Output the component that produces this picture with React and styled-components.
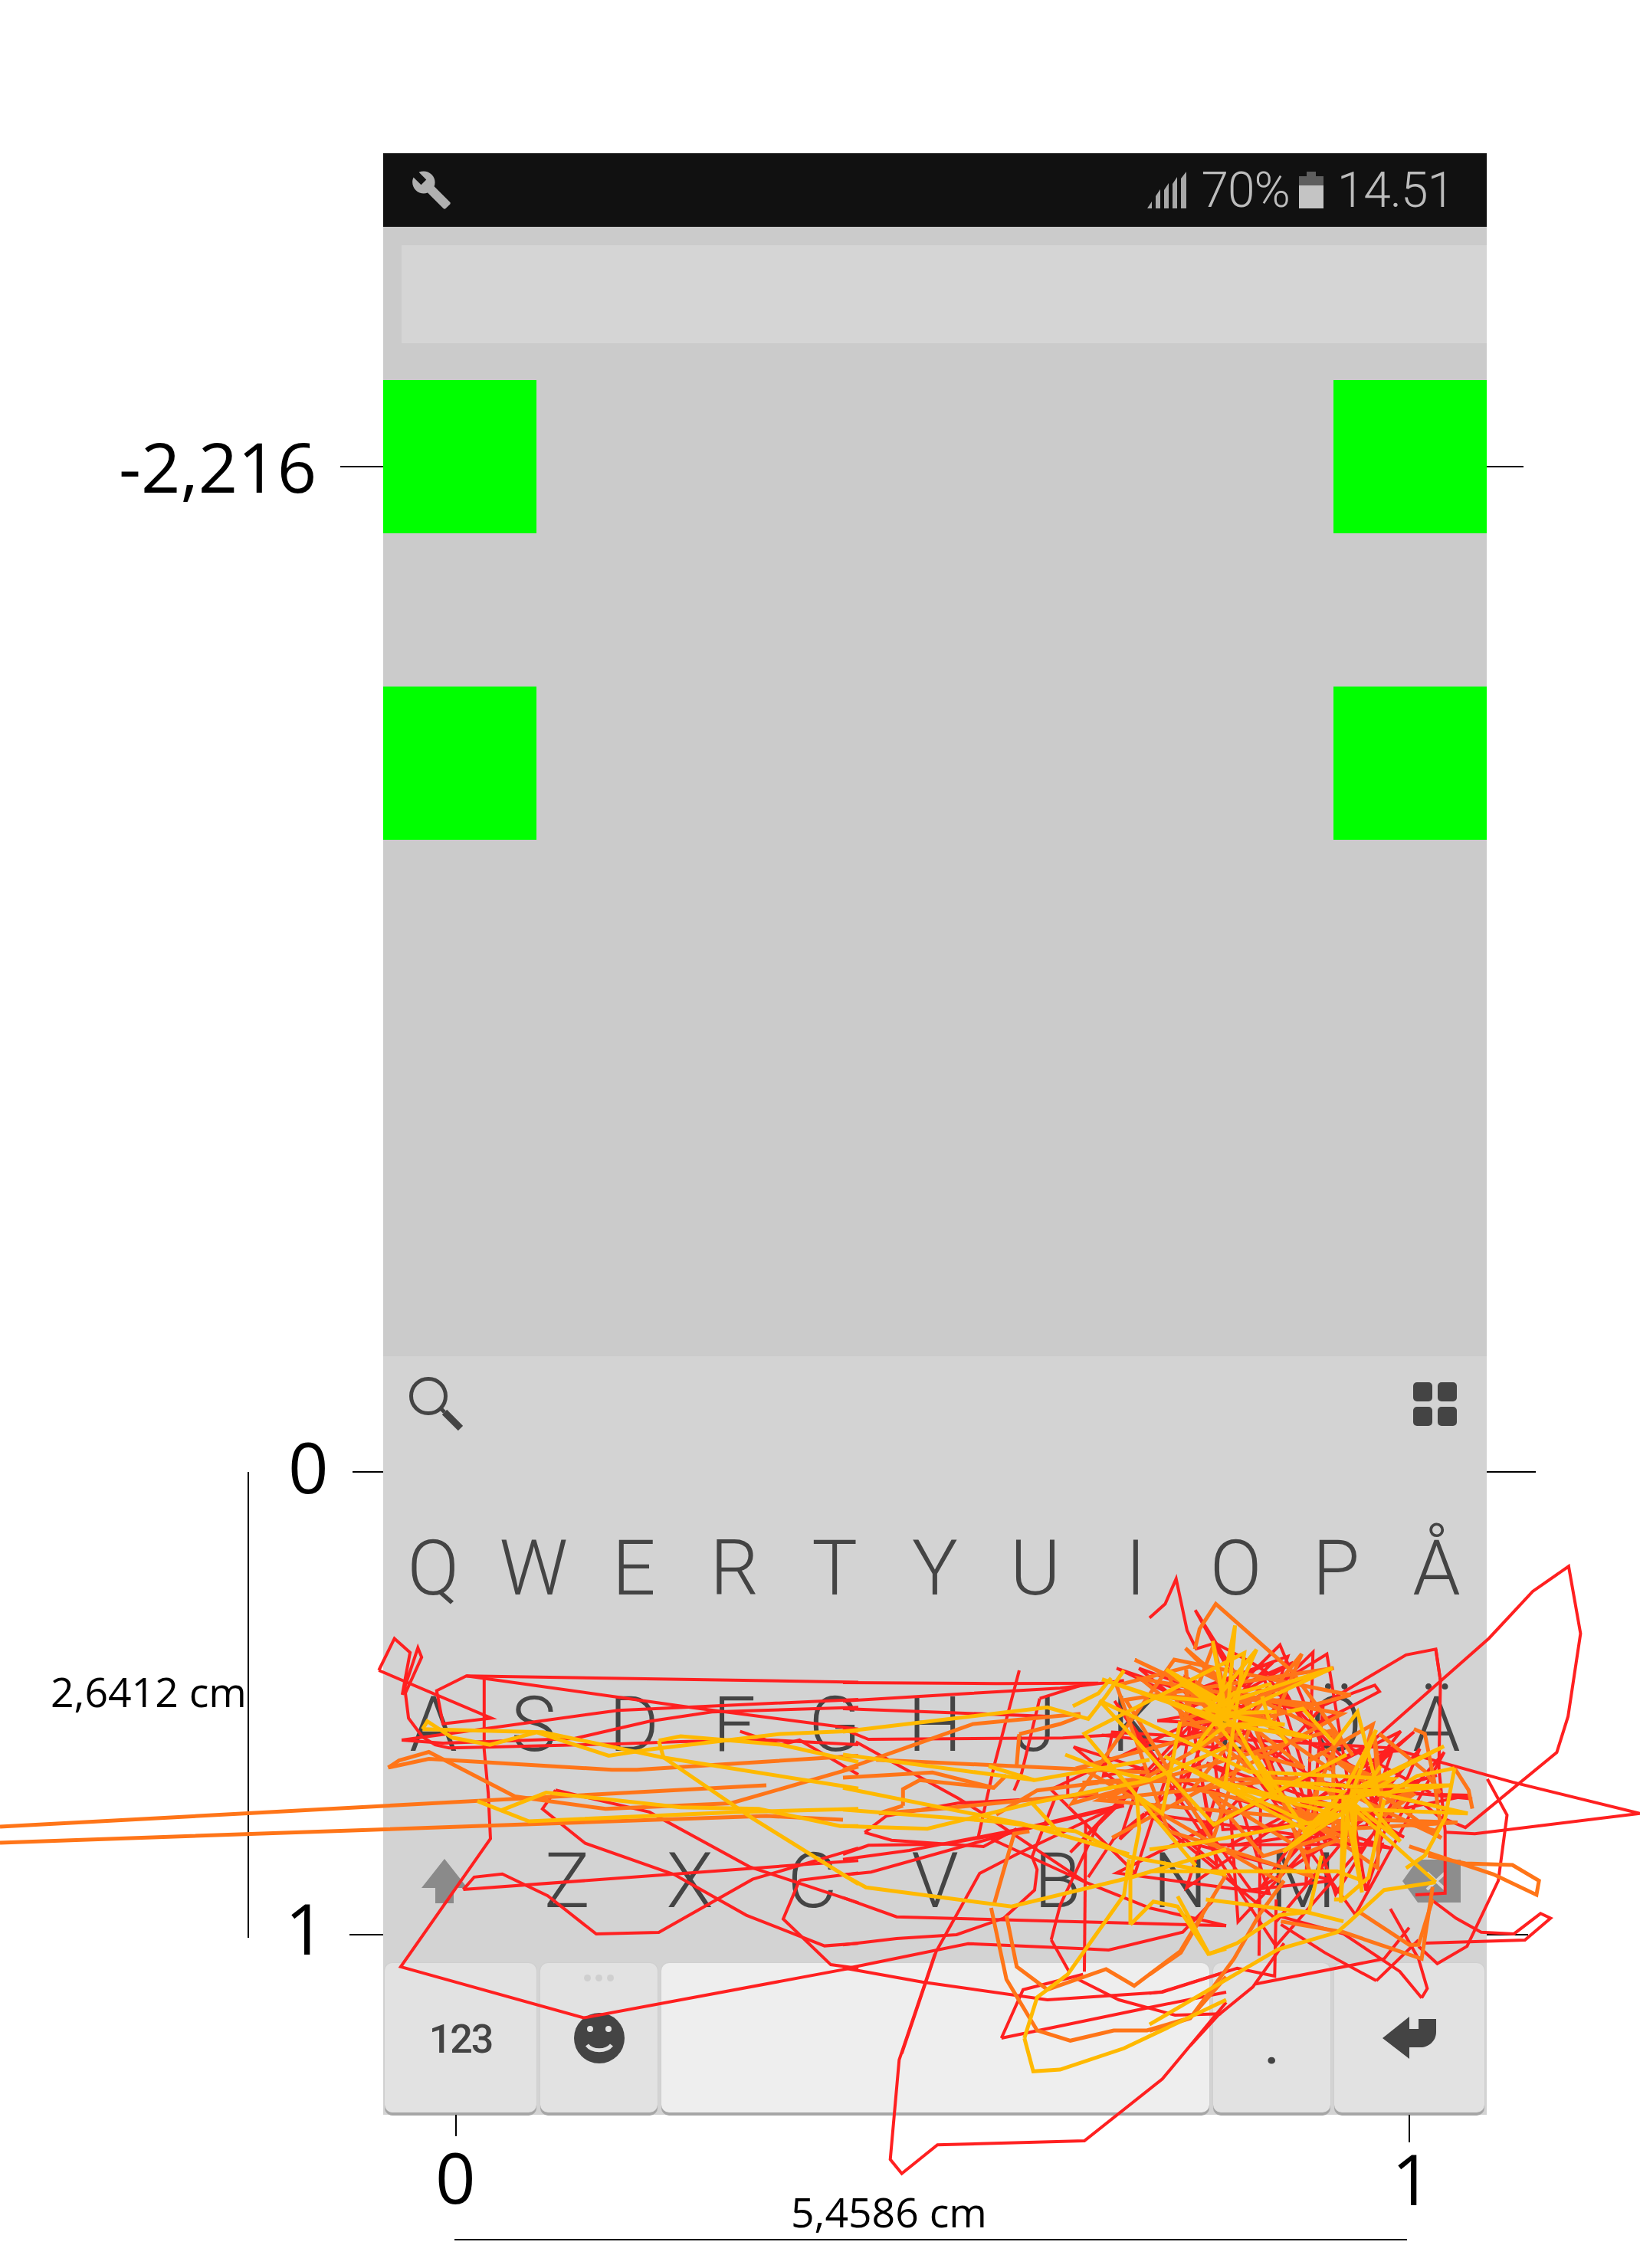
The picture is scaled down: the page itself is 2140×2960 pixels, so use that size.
import styled, { createGlobalStyle } from "styled-components"

const Global = createGlobalStyle`
body {
    margin: 0;
    background: #fff;
}
`

const Figure = styled.div`
position: relative;
width: 2140px;
height: 2960px;
padding: 200px 0 0 500px;
box-sizing: border-box;
background: #fff;
overflow: hidden;
`

const Phone = styled.div`
display: flex;
flex-direction: column;
width: 1440px;
height: 2560px;
font-family: Roboto, sans-serif;
`

const StatusBar = styled.div`
display: flex;
flex: 0 0 96px;
align-items: center;
justify-content: space-between;
padding: 0 43px 0 36px;
background: #111;
color: #bcbcbc;
`

const StatusRight = styled.div`
display: flex;
align-items: center;
font-size: 64px;
font-weight: 300;
line-height: 1;
`

const StatusText = styled.span`
margin-left: ${props => props.$gap}px;
padding-top: 2px;
letter-spacing: -1px;
`

const Screen = styled.div`
flex: 1;
padding-top: 24px;
background: #cbcbcb;
`

const SearchBar = styled.div`
height: 128px;
margin-left: 24px;
background: #d5d5d5;
`

const Targets = styled.div`
display: grid;
grid-template-columns: 200px 200px;
justify-content: space-between;
row-gap: 200px;
margin-top: 48px;
`

const Target = styled.div`
height: 200px;
background: #0f0;
`

const Keyboard = styled.div`
display: flex;
flex: 0 0 990px;
flex-direction: column;
background: #d3d3d3;
color: #444;
`

const Toolbar = styled.div`
display: flex;
flex: 0 0 175px;
justify-content: space-between;
padding: 27px 38px 0 34px;
box-sizing: border-box;
`

const LetterRow = styled.div`
display: grid;
flex: 0 0 204px;
grid-template-columns: ${props => props.$columns};
`

const Letter = styled.span`
display: flex;
align-items: center;
justify-content: center;
font-size: 100px;
font-weight: 300;
line-height: 1;
`

const BottomRow = styled.div`
display: flex;
gap: 5px;
height: 195px;
margin-top: 5px;
padding: 0 2px;
`

const Key = styled.div`
display: flex;
position: relative;
flex: 0 0 ${props => props.$width}px;
align-items: center;
justify-content: center;
box-sizing: border-box;
border-radius: 10px;
background: ${props => props.$light ? "#eee" : "#e2e2e2"};
box-shadow: 0 4px 0 #a6a6a6, 0 0 0 1px #cfcfcf;
`

const NumberLabel = styled.span`
padding-top: 4px;
font-size: 52px;
font-weight: 500;
letter-spacing: -2px;
line-height: 1;
`

const PeriodLabel = styled.span`
padding-top: 26px;
font-size: 60px;
font-weight: 700;
line-height: 1;
`

const Hint = styled.div`
display: flex;
position: absolute;
top: 15px;
left: 0;
right: 0;
justify-content: center;
gap: 6px;
`

const HintDot = styled.i`
width: 9px;
height: 9px;
border-radius: 50%;
background: #cfcfcf;
`

const Mark = styled.span`
position: absolute;
left: ${props => props.$x}px;
top: ${props => props.$y}px;
font-family: "Open Sans", sans-serif;
font-size: ${props => props.$size}px;
line-height: 1;
white-space: nowrap;
color: #000;
`

const Tick = styled.div`
position: absolute;
left: ${props => props.$x}px;
top: ${props => props.$y}px;
width: ${props => props.$w}px;
height: ${props => props.$h}px;
background: #000;
`

const Trace = styled.svg`
position: absolute;
left: 0;
top: 0;
pointer-events: none;
`

// points below were read off zoomed crops, so each list keeps its crop origin and scale
const crop = (x, y, s, list) => list.map(line => line.map(([a, b]) => [x + a / s, y + b / s]))
const left = list => crop(480, 2120, 2.45, list)
const mid = list => crop(1100, 2180, 3, list)
const right = list => crop(1500, 2030, 2.45, list)

const hubs = [[1594, 2234], [1753, 2348]]

function randomFrom(seed) {
    let n = seed
    return () => {
        n = (n * 16807) % 2147483647
        return n / 2147483647
    }
}

// spokes going out from the two most used keys and back
function scribble(seed, count, minR, maxR, jitter) {
    const rnd = randomFrom(seed)
    return hubs.map(([hx, hy]) => {
        const line = []
        for (let i = 0; i < count; i++) {
            const a = rnd() * Math.PI * 2
            const r = minR + rnd() * (maxR - minR)
            line.push([hx + Math.cos(a) * r, hy + Math.sin(a) * r * 0.8])
            line.push([hx + (rnd() - 0.5) * jitter, hy + (rnd() - 0.5) * jitter])
        }
        return line
    })
}

// wandering line over the right half of the keyboard
function web(seed, count, cx, cy, rx, ry) {
    const rnd = randomFrom(seed)
    const line = []
    for (let i = 0; i < count; i++) {
        const a = rnd() * Math.PI * 2
        const r = Math.sqrt(rnd())
        line.push([cx + Math.cos(a) * r * rx, cy + Math.sin(a) * r * ry])
    }
    return [line]
}

const red = [
    ...left([
        [[35, 147], [85, 45], [135, 90], [110, 225], [160, 75], [172, 105], [120, 220], [130, 300], [175, 360], [215, 385], [260, 395], [400, 392], [800, 382], [1000, 375], [1290, 370], [1568, 385]],
        [[35, 147], [395, 300], [240, 318], [220, 212], [315, 165], [1568, 185]],
        [[372, 170], [372, 400], [385, 540], [392, 685], [105, 1095], [690, 1258], [1568, 1095]],
        [[108, 370], [400, 330], [800, 275], [1568, 240]],
        [[108, 370], [240, 380], [660, 365], [900, 310], [1100, 280], [1568, 265]],
        [[315, 165], [1030, 265], [1568, 335]],
        [[1190, 342], [1320, 385], [1380, 370], [1568, 480]],
        [[600, 530], [900, 600], [1220, 775], [1568, 890]],
        [[600, 530], [558, 590], [695, 700], [980, 800], [1210, 930], [1460, 1028], [1568, 1020]],
        [[305, 848], [340, 808], [430, 798], [575, 868], [730, 990], [930, 985], [1230, 815], [1568, 715]],
        [[305, 848], [1568, 755]],
        [[1380, 818], [1568, 795]],
        [[1380, 818], [1328, 942], [1480, 1088], [1568, 1100]],
    ]),
    ...mid([
        [[0, 48], [600, 52], [1000, 50]],
        [[0, 120], [500, 90], [850, 70], [1100, 40]],
        [[0, 150], [400, 165], [800, 180]],
        [[0, 230], [100, 270], [860, 265], [1100, 250]],
        [[85, 635], [190, 665], [550, 690], [680, 620]],
        [[85, 635], [170, 570], [450, 520], [1000, 490]],
        [[0, 720], [100, 685], [400, 680], [680, 630], [1100, 530]],
        [[0, 740], [260, 705], [700, 620], [1080, 530]],
        [[10, 800], [110, 790], [680, 630]],
        [[0, 890], [210, 965], [1500, 1000]],
        [[0, 1075], [210, 1050], [445, 1035], [630, 970], [750, 860], [760, 780], [740, 730], [830, 500]],
        [[0, 1170], [490, 1070], [940, 1090], [1040, 1095], [1330, 1025], [1450, 900]],
        [[230, 1500], [365, 1100], [535, 795], [680, 720], [1100, 520]],
        [[0, 1165], [310, 1220], [800, 1290], [1250, 1260], [1500, 1180]],
        [[620, 1440], [705, 1250], [940, 1190]],
        [[620, 1440], [1200, 1320], [1500, 1260]],
        [[950, 590], [945, 1180]],
        [[880, 410], [880, 500]],
        [[815, 1055], [850, 920], [1000, 600]],
        [[815, 1055], [885, 1180]],
        [[920, 1210], [1080, 1290], [1300, 1350], [1480, 1345]],
        [[690, 0], [590, 380], [530, 650]],
        [[770, 110], [960, 50]],
        [[770, 110], [700, 400], [670, 470]],
        [[960, 810], [1060, 660], [1180, 560]],
        [[580, 660], [950, 830], [1200, 930], [1500, 1000]],
        [[50, 280], [450, 500], [530, 550], [950, 830]],
    ]),
    ...crop(1100, 2500, 3, [
        [[360, 150], [220, 565], [185, 955], [230, 1010], [370, 898], [945, 882], [1250, 640], [1500, 340]],
    ]),
    ...right([
        [[0, 200], [50, 155], [85, 75], [120, 240], [145, 290]],
        [[145, 300], [210, 280], [330, 345], [415, 400], [470, 500], [520, 570]],
        [[930, 400], [915, 300], [820, 318], [530, 490], [650, 440], [720, 415], [735, 435], [650, 480], [530, 540]],
        [[705, 600], [1085, 265], [1225, 115], [1340, 35], [1378, 250], [1338, 515], [1302, 630], [1010, 870], [925, 835], [870, 790], [830, 785], [790, 850]],
        [[915, 300], [930, 400], [925, 680], [945, 880], [945, 1080], [850, 1085]],
        [[730, 630], [800, 625], [1160, 725], [1568, 825], [1040, 890], [945, 885]],
        [[1080, 715], [1143, 830], [1115, 1040], [1015, 1250], [920, 1305], [860, 1250]],
        [[880, 1240], [1200, 1230], [1282, 1160], [1250, 1145], [1165, 1210], [1060, 1205], [980, 1160], [900, 1100]],
        [[870, 1415], [888, 1385], [860, 1290], [770, 1130]],
        [[870, 1415], [800, 1330], [620, 1210], [420, 1155]],
        [[725, 1360], [560, 1270], [420, 1180]],
        [[725, 1360], [860, 1230]],
        [[340, 1370], [750, 1290], [830, 1190]],
        [[0, 1400], [40, 1395], [280, 1320], [400, 1345], [405, 1100]],
        [[130, 1568], [220, 1470], [330, 1380], [430, 1240]],
        [[350, 1280], [355, 800]],
    ]),
    ...scribble(11, 12, 40, 200, 70),
    ...web(5, 60, 1640, 2340, 280, 210),
]

const orange = [
    [[0, 2384], [1000, 2330]],
    [[0, 2405], [1000, 2370], [1100, 2375]],
    ...left([
        [[65, 458], [100, 435], [195, 408], [470, 550], [760, 590], [1160, 572], [1568, 455]],
        [[65, 458], [195, 430], [780, 465], [860, 465], [1568, 420]],
    ]),
    ...mid([
        [[0, 390], [510, 210], [930, 170]],
        [[0, 420], [350, 400], [590, 460], [640, 410]],
        [[130, 350], [1200, 400]],
        [[235, 530], [235, 465], [300, 430], [590, 460]],
        [[235, 530], [140, 560], [400, 540], [1000, 480]],
        [[600, 565], [760, 470], [1000, 440]],
        [[690, 250], [850, 210], [930, 180]],
        [[690, 250], [680, 370]],
        [[590, 920], [670, 640], [730, 630]],
        [[580, 930], [640, 1210], [760, 1410], [890, 1450], [1060, 1410], [1190, 1410], [1360, 1360], [1500, 1200]],
        [[640, 960], [680, 1160], [800, 1250], [1030, 1170], [1140, 1235], [1320, 1100], [1500, 800]],
    ]),
    ...right([
        [[145, 300], [160, 235], [212, 155], [455, 370], [600, 570], [650, 640]],
        [[735, 570], [880, 690], [930, 760]],
        [[845, 555], [880, 570], [910, 720], [930, 860], [915, 880], [830, 860]],
        [[975, 680], [1020, 750], [1032, 810]],
        [[890, 960], [1010, 985], [1160, 990], [1245, 1040], [1237, 1085], [1100, 1020], [830, 930]],
        [[905, 1060], [870, 1290], [620, 1205], [420, 1170]],
        [[205, 285], [150, 430]],
        [[205, 285], [250, 480]],
        [[670, 1140], [830, 1245], [860, 1245], [905, 1100]],
        [[0, 1340], [100, 1270], [170, 1150]],
        [[430, 1040], [350, 1150], [270, 1290], [130, 1480], [0, 1520]],
    ]),
    ...scribble(23, 12, 30, 170, 120),
    ...web(9, 34, 1630, 2310, 250, 160),
]

const amber = [
    ...left([
        [[175, 335], [190, 310], [270, 362], [390, 385], [540, 345], [770, 420], [900, 400], [1320, 350], [1568, 340]],
        [[175, 335], [560, 345], [940, 425], [1568, 525]],
        [[930, 372], [1000, 358], [1320, 385], [1568, 440]],
        [[930, 372], [945, 425], [1230, 620], [1568, 830]],
        [[350, 565], [515, 630], [1180, 600], [1568, 590]],
        [[425, 595], [570, 538], [1000, 585], [1250, 590], [1510, 645], [1568, 645]],
    ]),
    ...mid([
        [[0, 240], [800, 145], [960, 190], [1030, 100], [1100, 0]],
        [[0, 330], [750, 430], [1200, 350]],
        [[0, 460], [700, 600], [1120, 720]],
        [[0, 545], [580, 590], [910, 630], [1120, 730], [1500, 800]],
        [[0, 610], [330, 620], [740, 520], [1200, 430], [1500, 300]],
        [[570, 375], [750, 430]],
        [[0, 800], [90, 850], [660, 925], [1130, 810], [1500, 700]],
        [[1125, 995], [1125, 800], [1160, 620], [1150, 490], [1250, 560], [1320, 200]],
        [[1125, 995], [1215, 905], [1310, 925], [1430, 1110], [1500, 1090]],
        [[740, 520], [860, 650]],
        [[710, 1440], [760, 1280], [880, 1190], [1100, 880], [1120, 740]],
        [[710, 1440], [745, 1570], [850, 1563], [1100, 1480], [1500, 1290]],
        [[870, 330], [1000, 380], [1200, 430]],
        [[900, 140], [1000, 90], [1050, 30]],
    ]),
    ...right([
        [[0, 940], [150, 920], [540, 850], [600, 780]],
        [[975, 680], [855, 705], [750, 770]],
        [[975, 680], [945, 840], [880, 960], [820, 1000]],
        [[620, 780], [915, 1045]],
        [[915, 1045], [750, 1070], [640, 1170], [600, 1205], [410, 1260], [0, 1500]],
        [[390, 410], [320, 430], [270, 440], [220, 490]],
        [[360, 450], [380, 520], [440, 600]],
        [[440, 500], [490, 490], [590, 600], [665, 500], [735, 770]],
        [[190, 1275], [90, 1090]],
        [[190, 1275], [280, 1240], [415, 1150], [510, 1140], [550, 960]],
        [[590, 1100], [620, 1100], [700, 1030], [750, 780]],
        [[0, 1010], [600, 1010], [680, 1040]],
        [[180, 1100], [500, 1140], [620, 1170]],
    ]),
    ...scribble(47, 14, 50, 170, 40),
    ...web(3, 14, 1600, 2290, 250, 150),
]

const toPoints = line => line.map(([x, y]) => `${x.toFixed(1)},${y.toFixed(1)}`).join(" ")

function Lines({ data, color, width }) {
    return data.map((line, i) => (
        <polyline key={i} points={toPoints(line)} fill="none" stroke={color} strokeWidth={width} strokeLinejoin="miter" />
    ))
}

const Wrench = () => (
    <svg width="54" height="54" viewBox="0 0 24 24" fill="#b0b0b0">
        <path d="M22.7 19l-9.1-9.1c.9-2.3.4-5-1.5-6.9-2-2-5-2.4-7.4-1.3L9 6 6 9 1.6 4.7C.4 7.1.9 10.1 2.9 12.1c1.9 1.9 4.6 2.4 6.9 1.5l9.1 9.1c.4.4 1 .4 1.4 0l2.3-2.3c.5-.4.5-1.1.1-1.4z" />
    </svg>
)

const Signal = () => (
    <svg width="52" height="48" viewBox="0 0 52 48" fill="#a8a8a8">
        <path d="M0 48 6 39V48Z" />
        <path d="M11 32 17 23V48H11Z" />
        <path d="M22 24 28 15V48H22Z" />
        <path d="M33 16 39 7V48H33Z" />
        <path d="M44 9 51 0V48H44Z" />
    </svg>
)

const Battery = () => (
    <svg width="32" height="48" viewBox="0 0 32 48" style={{ marginLeft: 12 }}>
        <path d="M10 0H22V6H32V18H0V6H10Z" fill="#5e5e5e" />
        <rect y="18" width="32" height="30" fill="#c4c4c4" />
    </svg>
)

const SearchIcon = () => (
    <svg width="70" height="70" viewBox="0 0 70 70" fill="none" stroke="#444">
        <circle cx="25" cy="25" r="22.5" strokeWidth="5" />
        <path d="M41 41 46 46" strokeWidth="5" />
        <path d="M46 46 67 67" strokeWidth="9" />
    </svg>
)

const GridIcon = () => (
    <svg width="58" height="58" viewBox="0 0 58 58" fill="#444" style={{ marginTop: 7 }}>
        <rect width="25" height="25" rx="5" />
        <rect x="32" width="25" height="25" rx="5" />
        <rect y="32" width="25" height="25" rx="5" />
        <rect x="32" y="32" width="25" height="25" rx="5" />
    </svg>
)

const ShiftIcon = () => (
    <svg width="60" height="58" viewBox="0 0 60 58" fill="#8a8a8a">
        <path d="M30 0 60 38H42V58H18V38H0Z" />
    </svg>
)

const DeleteIcon = () => (
    <svg width="76" height="56" viewBox="0 0 76 56" style={{ marginLeft: 16 }}>
        <path d="M0 28 20 0H76V56H20Z" fill="#8d8d8d" />
        <path d="M32 17 56 39M56 17 32 39" stroke="#d3d3d3" strokeWidth="4" />
    </svg>
)

const Smile = () => (
    <svg width="66" height="66" viewBox="0 0 66 66">
        <circle cx="33" cy="33" r="33" fill="#444" />
        <circle cx="21" cy="21" r="4" fill="#e2e2e2" />
        <circle cx="45" cy="21" r="4" fill="#e2e2e2" />
        <path d="M17 42C24 51 42 51 49 42" fill="none" stroke="#e2e2e2" strokeWidth="5" />
    </svg>
)

const EnterIcon = () => (
    <svg width="71" height="56" viewBox="0 0 71 56" fill="#444">
        <path d="M0 28 35 0V16H47V3H70V20C70 32 60 40 50 40H35V55Z" />
    </svg>
)

const elevenKeys = "repeat(11, 1fr)"
const rowOne = ["Q", "W", "E", "R", "T", "Y", "U", "I", "O", "P", "Å"]
const rowTwo = ["A", "S", "D", "F", "G", "H", "J", "K", "L", "Ö", "Ä"]
const rowThree = ["Z", "X", "C", "V", "B", "N", "M"]

function App() {
    return (
        <Figure>
            <Global />
            <Phone>
                <StatusBar>
                    <Wrench />
                    <StatusRight>
                        <Signal />
                        <StatusText $gap={18}>70%</StatusText>
                        <Battery />
                        <StatusText $gap={18}>14.51</StatusText>
                    </StatusRight>
                </StatusBar>
                <Screen>
                    <SearchBar />
                    <Targets>
                        <Target />
                        <Target />
                        <Target />
                        <Target />
                    </Targets>
                </Screen>
                <Keyboard>
                    <Toolbar>
                        <SearchIcon />
                        <GridIcon />
                    </Toolbar>
                    <LetterRow $columns={elevenKeys}>
                        {rowOne.map(l => <Letter key={l}>{l}</Letter>)}
                    </LetterRow>
                    <LetterRow $columns={elevenKeys}>
                        {rowTwo.map(l => <Letter key={l}>{l}</Letter>)}
                    </LetterRow>
                    <LetterRow $columns="repeat(9, 160px)">
                        <Letter><ShiftIcon /></Letter>
                        {rowThree.map(l => <Letter key={l}>{l}</Letter>)}
                        <Letter><DeleteIcon /></Letter>
                    </LetterRow>
                    <BottomRow>
                        <Key $width={198}><NumberLabel>123</NumberLabel></Key>
                        <Key $width={153}>
                            <Hint><HintDot /><HintDot /><HintDot /></Hint>
                            <Smile />
                        </Key>
                        <Key $width={715} $light />
                        <Key $width={153}><PeriodLabel>.</PeriodLabel></Key>
                        <Key $width={196}><EnterIcon /></Key>
                    </BottomRow>
                </Keyboard>
            </Phone>

            <Mark $x={155} $y={563} $size={90}>-2,216</Mark>
            <Mark $x={376} $y={1868} $size={92}>0</Mark>
            <Mark $x={372} $y={2470} $size={92}>1</Mark>
            <Mark $x={568} $y={2795} $size={92}>0</Mark>
            <Mark $x={1816} $y={2797} $size={92}>1</Mark>
            <Mark $x={66} $y={2181} $size={53.5}>2,6412 cm</Mark>
            <Mark $x={1032} $y={2860} $size={53.5}>5,4586 cm</Mark>

            <Tick $x={444} $y={608} $w={56} $h={2} />
            <Tick $x={1940} $y={608} $w={48} $h={2} />
            <Tick $x={460} $y={1920} $w={40} $h={2} />
            <Tick $x={1940} $y={1920} $w={64} $h={2} />
            <Tick $x={456} $y={2524} $w={44} $h={2} />
            <Tick $x={1940} $y={2524} $w={54} $h={2} />
            <Tick $x={323} $y={1921} $w={2} $h={608} />
            <Tick $x={594} $y={2760} $w={2} $h={28} />
            <Tick $x={1838} $y={2760} $w={2} $h={36} />
            <Tick $x={593} $y={2922} $w={1243} $h={2} />

            <Trace width="2140" height="2960" viewBox="0 0 2140 2960">
                <Lines data={red} color="#ff2020" width={4} />
                <Lines data={orange} color="#ff7518" width={5} />
                <Lines data={amber} color="#ffb900" width={5} />
            </Trace>
        </Figure>
    )
}

export default App
